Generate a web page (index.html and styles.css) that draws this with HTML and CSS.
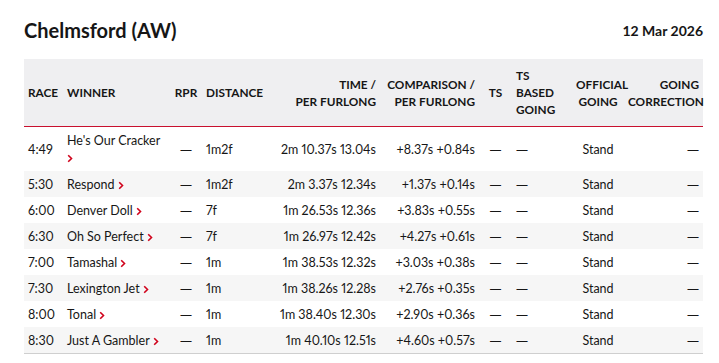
FILE: index.html
```html
<!DOCTYPE html>
<html>
<head>
<meta charset="utf-8">
<link rel="stylesheet" href="styles.css">
</head>
<body>
<div class="page">
  <div class="title-bar">
    <h1 class="course">Chelmsford (AW)</h1>
    <div class="date">12 Mar 2026</div>
  </div>
  <table class="results">
    <colgroup>
      <col class="c-race"><col class="c-winner"><col class="c-rpr"><col class="c-dist"><col class="c-time"><col class="c-comp"><col class="c-ts"><col class="c-tsbg"><col class="c-off"><col class="c-gc">
    </colgroup>
    <thead>
      <tr>
        <th class="l">RACE</th>
        <th class="l">WINNER</th>
        <th class="c">RPR</th>
        <th class="l">DISTANCE</th>
        <th class="r">TIME /<br>PER FURLONG</th>
        <th class="r">COMPARISON /<br>PER FURLONG</th>
        <th class="c">TS</th>
        <th class="l">TS<br>BASED<br>GOING</th>
        <th class="c">OFFICIAL<br>GOING</th>
        <th class="r">GOING<br>CORRECTION</th>
      </tr>
    </thead>
    <tbody>
      <tr class="tall">
        <td class="l">4:49</td>
        <td class="l">He's Our Cracker <svg class="chev" viewBox="0 0 6 9" width="6" height="9"><path d="M1.2 1.2l3.3 3.3-3.3 3.3" fill="none" stroke="#d0021b" stroke-width="1.6"/></svg></td>
        <td class="c"><span class="dash">—</span></td><td class="l">1m2f</td>
        <td class="r">2m 10.37s 13.04s</td><td class="r">+8.37s +0.84s</td>
        <td class="c"><span class="dash">—</span></td><td class="l"><span class="dash">—</span></td><td class="c">Stand</td><td class="r"><span class="dash">—</span></td>
      </tr>
      <tr>
        <td class="l">5:30</td>
        <td class="l">Respond <svg class="chev" viewBox="0 0 6 9" width="6" height="9"><path d="M1.2 1.2l3.3 3.3-3.3 3.3" fill="none" stroke="#d0021b" stroke-width="1.6"/></svg></td>
        <td class="c"><span class="dash">—</span></td><td class="l">1m2f</td>
        <td class="r">2m 3.37s 12.34s</td><td class="r">+1.37s +0.14s</td>
        <td class="c"><span class="dash">—</span></td><td class="l"><span class="dash">—</span></td><td class="c">Stand</td><td class="r"><span class="dash">—</span></td>
      </tr>
      <tr>
        <td class="l">6:00</td>
        <td class="l">Denver Doll <svg class="chev" viewBox="0 0 6 9" width="6" height="9"><path d="M1.2 1.2l3.3 3.3-3.3 3.3" fill="none" stroke="#d0021b" stroke-width="1.6"/></svg></td>
        <td class="c"><span class="dash">—</span></td><td class="l">7f</td>
        <td class="r">1m 26.53s 12.36s</td><td class="r">+3.83s +0.55s</td>
        <td class="c"><span class="dash">—</span></td><td class="l"><span class="dash">—</span></td><td class="c">Stand</td><td class="r"><span class="dash">—</span></td>
      </tr>
      <tr>
        <td class="l">6:30</td>
        <td class="l">Oh So Perfect <svg class="chev" viewBox="0 0 6 9" width="6" height="9"><path d="M1.2 1.2l3.3 3.3-3.3 3.3" fill="none" stroke="#d0021b" stroke-width="1.6"/></svg></td>
        <td class="c"><span class="dash">—</span></td><td class="l">7f</td>
        <td class="r">1m 26.97s 12.42s</td><td class="r">+4.27s +0.61s</td>
        <td class="c"><span class="dash">—</span></td><td class="l"><span class="dash">—</span></td><td class="c">Stand</td><td class="r"><span class="dash">—</span></td>
      </tr>
      <tr>
        <td class="l">7:00</td>
        <td class="l">Tamashal <svg class="chev" viewBox="0 0 6 9" width="6" height="9"><path d="M1.2 1.2l3.3 3.3-3.3 3.3" fill="none" stroke="#d0021b" stroke-width="1.6"/></svg></td>
        <td class="c"><span class="dash">—</span></td><td class="l">1m</td>
        <td class="r">1m 38.53s 12.32s</td><td class="r">+3.03s +0.38s</td>
        <td class="c"><span class="dash">—</span></td><td class="l"><span class="dash">—</span></td><td class="c">Stand</td><td class="r"><span class="dash">—</span></td>
      </tr>
      <tr>
        <td class="l">7:30</td>
        <td class="l">Lexington Jet <svg class="chev" viewBox="0 0 6 9" width="6" height="9"><path d="M1.2 1.2l3.3 3.3-3.3 3.3" fill="none" stroke="#d0021b" stroke-width="1.6"/></svg></td>
        <td class="c"><span class="dash">—</span></td><td class="l">1m</td>
        <td class="r">1m 38.26s 12.28s</td><td class="r">+2.76s +0.35s</td>
        <td class="c"><span class="dash">—</span></td><td class="l"><span class="dash">—</span></td><td class="c">Stand</td><td class="r"><span class="dash">—</span></td>
      </tr>
      <tr>
        <td class="l">8:00</td>
        <td class="l">Tonal <svg class="chev" viewBox="0 0 6 9" width="6" height="9"><path d="M1.2 1.2l3.3 3.3-3.3 3.3" fill="none" stroke="#d0021b" stroke-width="1.6"/></svg></td>
        <td class="c"><span class="dash">—</span></td><td class="l">1m</td>
        <td class="r">1m 38.40s 12.30s</td><td class="r">+2.90s +0.36s</td>
        <td class="c"><span class="dash">—</span></td><td class="l"><span class="dash">—</span></td><td class="c">Stand</td><td class="r"><span class="dash">—</span></td>
      </tr>
      <tr>
        <td class="l">8:30</td>
        <td class="l">Just A Gambler <svg class="chev" viewBox="0 0 6 9" width="6" height="9"><path d="M1.2 1.2l3.3 3.3-3.3 3.3" fill="none" stroke="#d0021b" stroke-width="1.6"/></svg></td>
        <td class="c"><span class="dash">—</span></td><td class="l">1m</td>
        <td class="r">1m 40.10s 12.51s</td><td class="r">+4.60s +0.57s</td>
        <td class="c"><span class="dash">—</span></td><td class="l"><span class="dash">—</span></td><td class="c">Stand</td><td class="r"><span class="dash">—</span></td>
      </tr>
    </tbody>
  </table>
</div>
</body>
</html>
```

FILE: styles.css
```css
* { box-sizing: border-box; }
html, body { margin: 0; padding: 0; background: #fff; }
body {
  font-family: Lato, "Liberation Sans", sans-serif;
  color: #161616;
}
.page {
  width: 679px;
  margin-left: 24px;
}
.title-bar {
  display: flex;
  justify-content: space-between;
  align-items: flex-start;
  height: 59px;
  padding-top: 18px;
}
.course {
  margin: 0;
  font-size: 20px;
  font-weight: 700;
  line-height: 24px;
}
.date {
  font-size: 14px;
  font-weight: 700;
  line-height: 16px;
  padding-top: 5px;
}
.results {
  width: 679px;
  table-layout: fixed;
  border-collapse: collapse;
  border-spacing: 0;
  font-size: 12.5px;
  font-variant-numeric: proportional-nums;
}
.c-race { width: 39px; }
.c-winner { width: 107px; }
.c-rpr { width: 32px; }
.c-dist { width: 66px; }
.c-time { width: 112px; }
.c-comp { width: 99px; }
.c-ts { width: 33px; }
.c-tsbg { width: 60px; }
.c-off { width: 52px; }
.c-gc { width: 79px; }
.results thead tr {
  background: #efeff1;
  border-bottom: 1px solid #c8102e;
}
.results th {
  font-size: 11.8px;
  font-weight: 700;
  line-height: 17px;
  padding: 8px 4px;
  height: 67px;
  vertical-align: middle;
  white-space: nowrap;
}
.results td {
  line-height: 17px;
  padding: 4.5px 4px;
  height: 26px;
  vertical-align: middle;
}
.results tr.tall td {
  padding-top: 5px;
  padding-bottom: 5px;
  height: 44px;
}
.results tbody tr:nth-child(even) { background: #f6f6f6; }
.results tbody tr:last-child { border-bottom: 1px solid #cfcfcf; }
.l { text-align: left; }
.c { text-align: center; }
.r { text-align: right; }
.chev { vertical-align: -1px; }
.dash { font-family: "Open Sans", sans-serif; font-size: 12px; }
```
